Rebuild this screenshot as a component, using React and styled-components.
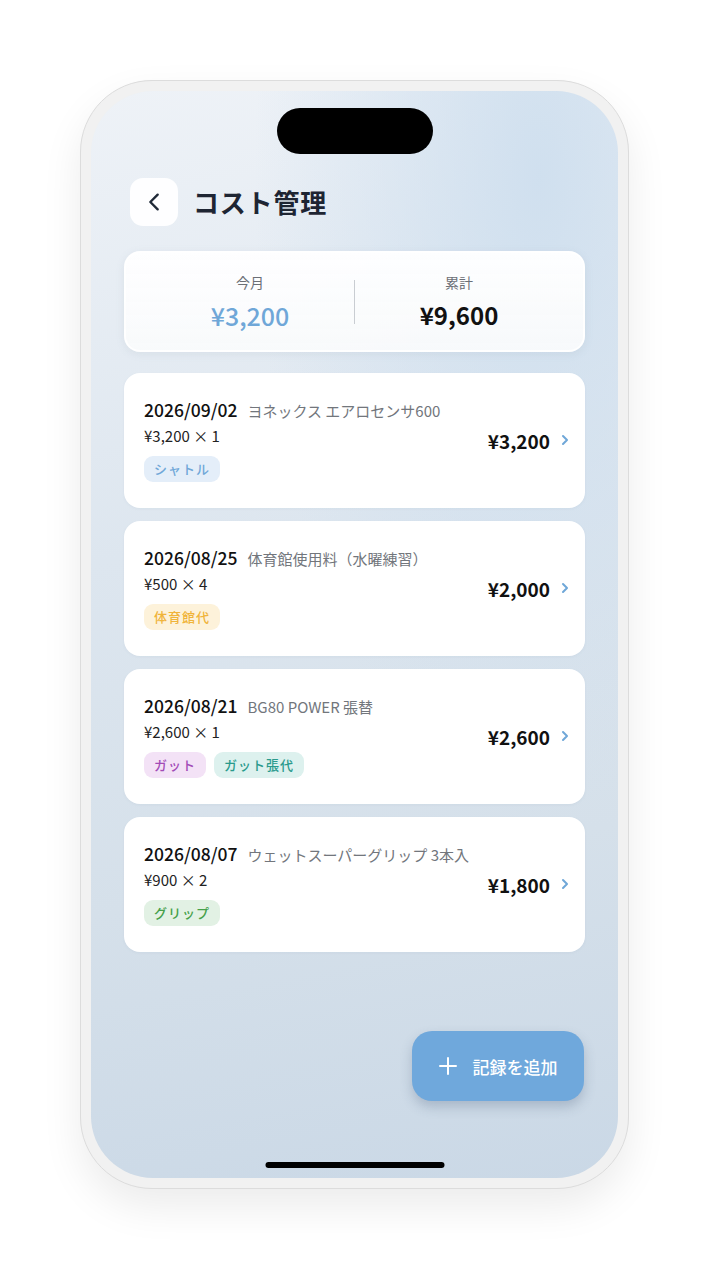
import React from 'react'
import styled, { createGlobalStyle } from 'styled-components'

const GlobalStyle = createGlobalStyle`
  html, body {
    margin: 0;
    padding: 0;
    background: #ffffff;
    font-family: "Noto Sans CJK JP", "Noto Sans", sans-serif;
  }
`

const Page = styled.div`
  width: 721px;
  height: 1280px;
  padding: 80px 0 0 80px;
  box-sizing: border-box;
`

const Phone = styled.div`
  width: 549px;
  height: 1109px;
  box-sizing: border-box;
  padding: 10px;
  border-radius: 72px;
  background: #f1f1f1;
  border: 1px solid #dcdcdc;
  box-shadow: 0 18px 40px rgba(0, 0, 0, 0.08);
`

const Screen = styled.div`
  position: relative;
  height: 100%;
  border-radius: 62px;
  overflow: hidden;
  box-sizing: border-box;
  padding: 87px 33px 0 33px;
  background:
    radial-gradient(ellipse at 85% 8%, rgba(205, 222, 238, 0.9) 0%, rgba(205, 222, 238, 0) 45%),
    linear-gradient(170deg, #eef2f7 0%, #dde6ef 40%, #d5e0ea 70%, #cad8e6 100%);
`

const Island = styled.div`
  position: absolute;
  top: 17px;
  left: 50%;
  transform: translateX(-50%);
  width: 156px;
  height: 46px;
  border-radius: 23px;
  background: #000;
`

const HomeBar = styled.div`
  position: absolute;
  bottom: 10px;
  left: 50%;
  transform: translateX(-50%);
  width: 179px;
  height: 6px;
  border-radius: 3px;
  background: #000;
`

const Header = styled.div`
  display: flex;
  align-items: center;
  gap: 15px;
  margin-left: 6px;
`

const BackButton = styled.div`
  width: 48px;
  height: 48px;
  border-radius: 13px;
  background: rgba(255, 255, 255, 0.92);
  display: flex;
  align-items: center;
  justify-content: center;
  color: #1f2937;
`

const Title = styled.h1`
  margin: 0;
  font-size: 26px;
  line-height: 36px;
  font-weight: 700;
  color: #1e2533;
  letter-spacing: 0.8px;
`

const Summary = styled.div`
  margin-top: 25px;
  height: 101px;
  box-sizing: border-box;
  padding: 0 20px;
  border-radius: 16px;
  background: linear-gradient(180deg, rgba(255, 255, 255, 0.95), rgba(250, 251, 252, 0.92));
  border: 2px solid rgba(255, 255, 255, 0.9);
  box-shadow: 0 2px 8px rgba(120, 140, 160, 0.12);
  display: grid;
  grid-template-columns: 1fr 1px 1fr;
  align-items: center;
`

const SummaryCol = styled.div`
  display: flex;
  flex-direction: column;
  align-items: center;
  gap: 7px;
`

const SummaryLabel = styled.div`
  font-size: 14px;
  line-height: 20px;
  color: #6b6f76;
`

const SummaryValue = styled.div`
  font-size: ${p => (p.accent ? 25 : 24)}px;
  line-height: 32px;
  font-weight: ${p => (p.accent ? 500 : 700)};
  color: ${p => (p.accent ? '#6fa7d8' : '#111')};
`

const Divider = styled.div`
  width: 1px;
  height: 44px;
  background: #c9cdd2;
`

const List = styled.div`
  margin-top: 21px;
  display: flex;
  flex-direction: column;
  gap: 13px;
`

const Card = styled.div`
  background: #fff;
  border-radius: 16px;
  padding: 25px 14px 26px 20px;
  display: flex;
  align-items: center;
  box-shadow: 0 1px 3px rgba(120, 140, 160, 0.08);
`

const CardBody = styled.div`
  flex: 1;
  display: flex;
  flex-direction: column;
`

const TopLine = styled.div`
  display: flex;
  align-items: baseline;
  gap: 10px;
  line-height: 24px;
`

const DateText = styled.span`
  font-size: 17.5px;
  font-weight: 500;
  color: #111;
`

const ItemName = styled.span`
  font-size: 15px;
  color: #72767c;
`

const Qty = styled.div`
  margin-top: 3px;
  font-size: 15px;
  line-height: 20px;
  color: #222;
`

const Tags = styled.div`
  margin-top: 10px;
  display: flex;
  gap: 8px;
`

const Tag = styled.span`
  height: 26px;
  padding: 0 10px;
  border-radius: 9px;
  font-size: 13px;
  font-weight: 500;
  line-height: 26px;
  letter-spacing: 1px;
  background: ${p => p.bg};
  color: ${p => p.fg};
`

const Amount = styled.div`
  font-size: 19px;
  font-weight: 700;
  color: #111;
  margin-right: 9px;
`

const Fab = styled.div`
  position: absolute;
  right: 34px;
  bottom: 77px;
  width: 172px;
  height: 70px;
  border-radius: 20px;
  background: #6fa8dc;
  box-shadow: 0 6px 12px rgba(60, 80, 110, 0.25);
  display: flex;
  align-items: center;
  justify-content: center;
  gap: 16px;
  color: #fff;
  font-size: 17px;
  font-weight: 500;
`

const TAGS = {
  shuttle: { bg: '#e4eef9', fg: '#6fa7d8' },
  gym: { bg: '#fdf2da', fg: '#f0b43a' },
  gut: { bg: '#f3e2f6', fg: '#a24bb6' },
  string: { bg: '#ddf1ee', fg: '#2a9a8c' },
  grip: { bg: '#e2f1e4', fg: '#45a049' }
}

const records = [
  { date: '2026/09/02', name: 'ヨネックス エアロセンサ600', qty: '¥3,200 × 1', amount: '¥3,200', tags: [['シャトル', 'shuttle']] },
  { date: '2026/08/25', name: '体育館使用料（水曜練習）', qty: '¥500 × 4', amount: '¥2,000', tags: [['体育館代', 'gym']] },
  { date: '2026/08/21', name: 'BG80 POWER 張替', qty: '¥2,600 × 1', amount: '¥2,600', tags: [['ガット', 'gut'], ['ガット張代', 'string']] },
  { date: '2026/08/07', name: 'ウェットスーパーグリップ 3本入', qty: '¥900 × 2', amount: '¥1,800', tags: [['グリップ', 'grip']] }
]

function Chevron ({ dir = 'right', size = 12, color = '#6fa7d8', width = 2 }) {
  const d = dir === 'right' ? 'M4 2 L8 6 L4 10' : 'M8 2 L4 6 L8 10'
  return (
    <svg width={size} height={size} viewBox='0 0 12 12' fill='none'>
      <path d={d} stroke={color} strokeWidth={width} strokeLinecap='round' strokeLinejoin='round' />
    </svg>
  )
}

function App () {
  return (
    <Page>
      <GlobalStyle />
      <Phone>
        <Screen>
          <Island />
          <Header>
            <BackButton>
              <Chevron dir='left' size={22} color='#1f2937' width={1.3} />
            </BackButton>
            <Title>コスト管理</Title>
          </Header>

          <Summary>
            <SummaryCol>
              <SummaryLabel>今月</SummaryLabel>
              <SummaryValue accent>¥3,200</SummaryValue>
            </SummaryCol>
            <Divider />
            <SummaryCol>
              <SummaryLabel>累計</SummaryLabel>
              <SummaryValue>¥9,600</SummaryValue>
            </SummaryCol>
          </Summary>

          <List>
            {records.map(r => (
              <Card key={r.date}>
                <CardBody>
                  <TopLine>
                    <DateText>{r.date}</DateText>
                    <ItemName>{r.name}</ItemName>
                  </TopLine>
                  <Qty>{r.qty}</Qty>
                  <Tags>
                    {r.tags.map(([label, kind]) => (
                      <Tag key={label} bg={TAGS[kind].bg} fg={TAGS[kind].fg}>{label}</Tag>
                    ))}
                  </Tags>
                </CardBody>
                <Amount>{r.amount}</Amount>
                <Chevron />
              </Card>
            ))}
          </List>

          <Fab>
            <svg width='18' height='18' viewBox='0 0 18 18'>
              <path d='M9 1 V17 M1 9 H17' stroke='#fff' strokeWidth='2' strokeLinecap='round' />
            </svg>
            <span>記録を追加</span>
          </Fab>
          <HomeBar />
        </Screen>
      </Phone>
    </Page>
  )
}

export default App
